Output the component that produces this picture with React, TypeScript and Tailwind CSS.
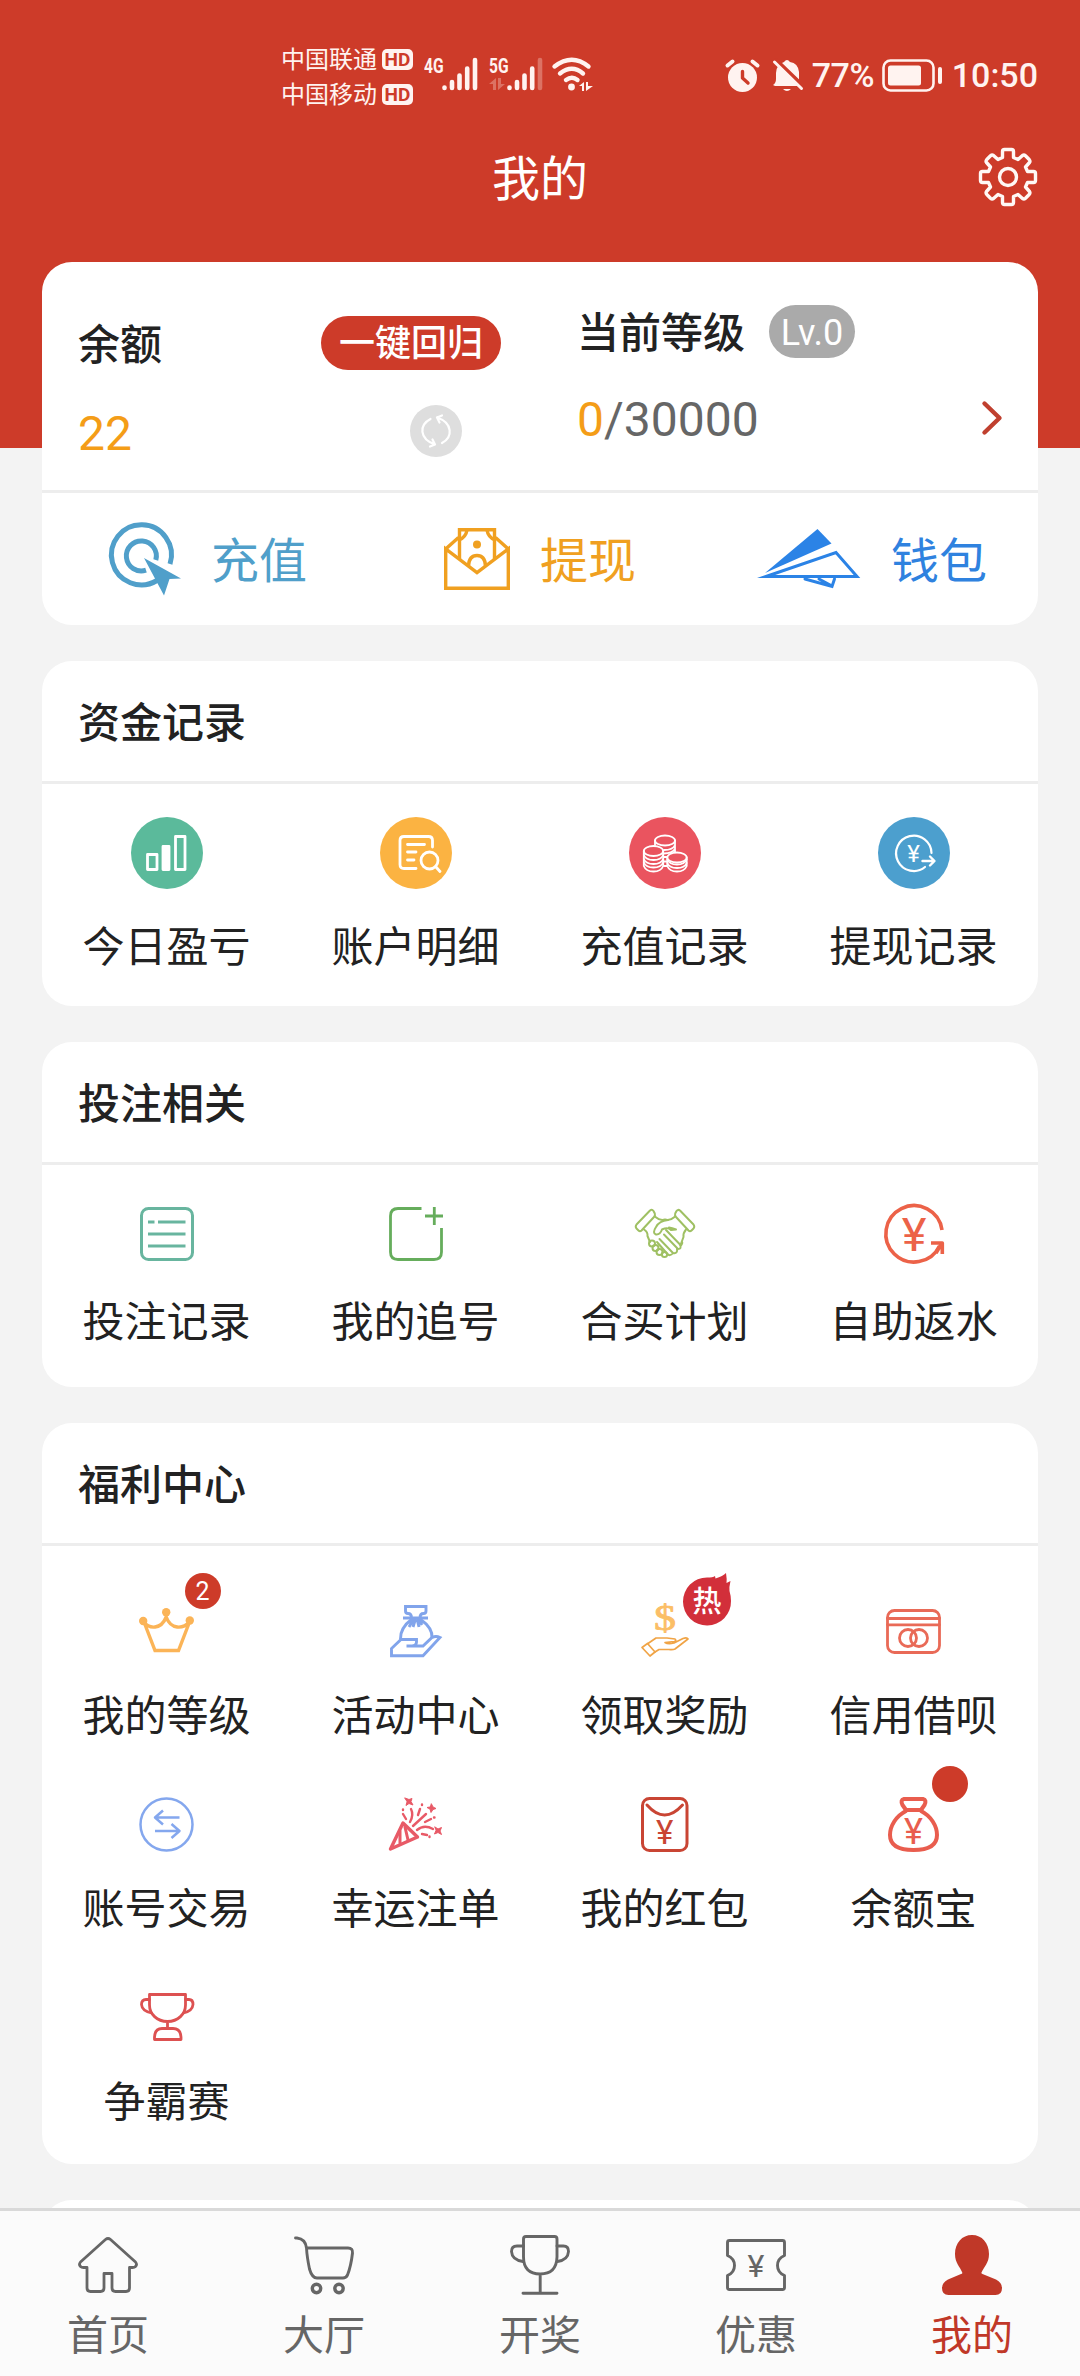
import { ReactNode } from "react";
import clsx from "clsx";

type Item = {
  label: string;
  icon: ReactNode;
  badge?: ReactNode;
};

type SvgProps = {
  w: number;
  h: number;
  color?: string;
  stroke?: number;
  children: ReactNode;
};

function Svg({ w, h, color = "white", stroke = 3, children }: SvgProps) {
  return (
    <svg
      width={w}
      height={h}
      viewBox={`0 0 ${w} ${h}`}
      fill="none"
      stroke={color}
      strokeWidth={stroke}
      strokeLinecap="round"
      strokeLinejoin="round"
      className="shrink-0 overflow-visible"
    >
      {children}
    </svg>
  );
}

function Yen({ x, y, size, color, weight = 400 }: { x: number; y: number; size: number; color: string; weight?: number }) {
  return (
    <text
      x={x}
      y={y}
      fontSize={size}
      fontFamily="Roboto, sans-serif"
      fontWeight={weight}
      fill={color}
      stroke="none"
      textAnchor="middle"
    >
      ¥
    </text>
  );
}

/* status bar */

function SignalBars({ faded = false }: { faded?: boolean }) {
  return (
    <Svg w={36} h={34} stroke={4.6} color="#fff3f0">
      <path d="M2.5 30.5v.5M10 25v6M17.5 18.500v12.500M25.200 11.500v19.500" />
      <path d="M33 3v28" opacity={faded ? 0.3 : 1} />
    </Svg>
  );
}

function Carrier({ name }: { name: string }) {
  return (
    <div className="flex h-[35px] items-center gap-[5px]">
      <span className="text-[24px] leading-[36px]">{name}</span>
      <span className="flex h-[21px] w-[31px] items-center justify-center rounded-[5px] bg-[#fff3f0] text-[19px] leading-[21px] font-bold text-[#cd3b29]">
        HD
      </span>
    </div>
  );
}

function StatusBar() {
  return (
    <div className="flex h-[76px] justify-between pr-[42px] pl-[281px] text-[#fff3f0]">
      <div className="flex">
        <div className="flex flex-col">
          <Carrier name="中国联通" />
          <Carrier name="中国移动" />
        </div>
        <div className="ml-[11px] flex pt-[15px]">
          <span className="w-[18px] origin-left scale-x-[0.78] text-[20px] leading-[18px] font-bold">4G</span>
          <SignalBars />
        </div>
        <div className="ml-[11px] flex pt-[15px]">
          <div className="flex w-[18px] flex-col gap-[3px]">
            <span className="origin-left scale-x-[0.78] text-[20px] leading-[18px] font-bold">5G</span>
            <Svg w={16} h={12} stroke={1} color="none">
              <path d="M0 6L7 0V12H4V6ZM9 0H12V6H16L9 12Z" fill="#fff3f0" opacity="0.3" />
            </Svg>
          </div>
          <SignalBars faded />
        </div>
        <div className="ml-[9px] pt-[15px]">
          <Svg w={42} h={34} stroke={4.4} color="#fff3f0">
            <path d="M2.500 9.500Q20 -4 36.500 9.500M8 16.500Q20 7 31 16.500M14 23Q20 18.500 25.500 23" />
            <circle cx="19.500" cy="30" r="3.400" fill="#fff3f0" stroke="none" />
            <path d="M27 29L32 25V34H30V29ZM34 25H36V29H41L34 34Z" fill="#fff3f0" stroke="none" />
          </Svg>
        </div>
      </div>
      <div className="flex h-[67px] items-center text-[34px] leading-[67px] font-medium">
        <Svg w={35} h={33} stroke={4} color="#fff3f0">
          <circle cx="17.500" cy="18.500" r="14.500" fill="#fff3f0" stroke="none" />
          <path d="M2.500 6.500L7.500 2.500M27.500 2.500L32.500 6.500" />
          <path d="M17.500 12.500V19L23 24" stroke="#cd3b29" strokeWidth="3.400" />
        </Svg>
        <div className="ml-3">
          <Svg w={31} h={33} stroke={3} color="#fff3f0">
            <path
              d="M3 27H25L27 24V13Q26 4 18 3Q15 -1 12 3Q4 6 4 14V20Q4 24 1 26ZM11 30H19Q15 34 11 30Z"
              fill="#fff3f0"
              stroke="none"
            />
            <path d="M4 1L32 28" stroke="#cd3b29" strokeWidth="4" />
            <path d="M2.500 3L29.500 29.500" />
          </Svg>
        </div>
        <span className="ml-[9px] w-[63px] tracking-[-0.5px]">77%</span>
        <div className="ml-[7px]">
          <Svg w={61} h={33} stroke={2.6} color="#fff3f0">
            <rect x="1.500" y="1.500" width="50" height="30" rx="7" />
            <rect x="6" y="6.500" width="33" height="20" rx="2.500" fill="#fff3f0" stroke="none" />
            <rect x="56" y="8" width="4" height="17" rx="2" fill="#fff3f0" stroke="none" />
          </Svg>
        </div>
        <span className="ml-[9px]">10:50</span>
      </div>
    </div>
  );
}

function GearIcon() {
  return (
    <svg width="60" height="60" viewBox="-30 -30 60 60" fill="none" stroke="#fff8f5" strokeWidth="3.400" strokeLinejoin="round">
      <path d="M-5.500 -19.500V-25.500Q-5.500 -27.500 -3.500 -27.500H3.500Q5.500 -27.500 5.500 -25.500V-19.500L10 -17.500L14.500 -21.500Q16 -22.500 17.500 -21.200L21.200 -17.500Q22.500 -16 21.500 -14.500L17.500 -10L19.500 -5.500H25.500Q27.500 -5.500 27.500 -3.500V3.500Q27.500 5.500 25.500 5.500H19.500L17.500 10L21.500 14.500Q22.500 16 21.200 17.500L17.500 21.200Q16 22.500 14.500 21.500L10 17.500L5.500 19.500V25.500Q5.500 27.500 3.500 27.500H-3.500Q-5.500 27.500 -5.500 25.500V19.500L-10 17.500L-14.500 21.500Q-16 22.500 -17.500 21.200L-21.200 17.500Q-22.500 16 -21.500 14.500L-17.500 10L-19.500 5.500H-25.500Q-27.500 5.500 -27.500 3.500V-3.500Q-27.500 -5.500 -25.500 -5.500H-19.500L-17.500 -10L-21.500 -14.500Q-22.500 -16 -21.200 -17.500L-17.500 -21.200Q-16 -22.500 -14.500 -21.500L-10 -17.500Z" />
      <circle r="8.500" />
    </svg>
  );
}

/* balance card */

const actions = [
  {
    label: "充值",
    color: "text-[#509fca]",
    icon: (
      <Svg w={72} h={72} stroke={5} color="#509fca">
        <path d="M48 57.500A30 30 0 1 1 61 41" strokeLinecap="butt" />
        <path d="M37 47.200A15 15 0 1 1 46.800 37" strokeLinecap="butt" />
        <path d="M35 35L72 55.500L60.500 56L55 72.500Z" fill="#509fca" stroke="none" />
      </Svg>
    ),
  },
  {
    label: "提现",
    color: "text-[#f0a020]",
    icon: (
      <Svg w={66} h={62} stroke={3.4} color="#f0a020">
        <g strokeLinejoin="miter" strokeLinecap="butt">
          <path d="M1.700 21V60.300H64.300V21L33 44.500Z" />
          <path d="M1.700 21L14.500 9.500M64.300 21L51.500 9.500" />
          <path d="M15.500 31V1.700H50.500V31" />
          <path d="M23 2Q22 9 15 12M43 2Q44 9 51 12" />
          <path d="M24.500 38Q25 27.500 33 27.500Q41 27.500 41.500 38" />
        </g>
        <circle cx="33" cy="16.500" r="4" fill="#f0a020" stroke="none" />
      </Svg>
    ),
  },
  {
    label: "钱包",
    color: "text-[#2f82df]",
    icon: (
      <Svg w={104} h={60} stroke={3} color="#2b83e6">
        <path d="M60.500 0L74.500 14.500L8 44Z" fill="#2b83e6" stroke="none" />
        <path d="M9 47.500L79 23.500L100 47.500Z" strokeLinejoin="miter" strokeMiterlimit="20" />
        <path d="M48 50L75 57.500L77.500 50M62 50L75 57" strokeLinejoin="miter" />
      </Svg>
    ),
  },
];

function BalanceCard() {
  return (
    <section className="overflow-hidden rounded-[30px] bg-white">
      <div className="flex h-[228px] pr-9 pl-[36px]">
        <div className="w-[423px] pt-[54px]">
          <div className="flex h-[54px] items-center justify-between">
            <h2 className="pt-[5px] text-[42px] leading-[54px] font-medium text-[#222]">余额</h2>
            <button className="h-[54px] w-[180px] rounded-full bg-[#cd3b29] text-center text-[36px] leading-[57px] font-medium text-white">
              一键回归
            </button>
          </div>
          <div className="mt-[35px] flex h-[52px] items-center justify-between pr-[39px]">
            <span className="pt-[5px] text-[48px] leading-[52px] text-[#f49d17]">22</span>
            <span className="flex size-[52px] items-center justify-center rounded-full bg-[#dedede]">
              <Svg w={52} h={52} stroke={2.2}>
                <path d="M20.500 14C9 20 9 34 25 39.500M25 39.500L20 41.500M25 39.500L22.500 34.500" />
                <path d="M32 38C43 32 43 18 27 12.500M27 12.500L32 10.500M27 12.500L29.500 17.500" />
              </Svg>
            </span>
          </div>
        </div>
        <div className="ml-[76px] flex-1 pt-[43px]">
          <div className="flex h-[53px] items-center gap-[24px]">
            <h2 className="pt-[3px] text-[42px] leading-[53px] font-medium text-[#222]">当前等级</h2>
            <span className="h-[53px] w-[86px] rounded-full bg-[#aaa] text-center text-[36px] leading-[57px] text-white">Lv.0</span>
          </div>
          <div className="mt-[34px] flex h-[52px] items-center justify-between">
            <span className="pt-[3px] text-[48px] leading-[52px] text-[#666]">
              <span className="text-[#f49d17]">0</span>/30000
            </span>
            <Svg w={20} h={34} stroke={4.4} color="#c0402f">
              <path d="M2.500 2.500L17.500 17L2.500 31.500" />
            </Svg>
          </div>
        </div>
      </div>
      <div className="grid h-[135px] grid-cols-3 border-t-[3px] border-[#ededed]">
        {actions.map((action) => (
          <div key={action.label} className="flex items-center justify-center gap-[30px]">
            {action.icon}
            <span className={clsx("pt-[5px] text-[48px] leading-[60px]", action.color)}>{action.label}</span>
          </div>
        ))}
      </div>
    </section>
  );
}

/* sections */

function Disc({ className, children }: { className: string; children: ReactNode }) {
  return (
    <div className={clsx("size-[72px] rounded-full", className)}>
      <Svg w={72} h={72} stroke={2.2}>
        {children}
      </Svg>
    </div>
  );
}

const funds: Item[] = [
  {
    label: "今日盈亏",
    icon: (
      <Disc className="bg-[#5bba9b]">
        <g strokeWidth="2.800" strokeLinejoin="round">
          <rect x="16.500" y="37.500" width="9.500" height="15" />
          <rect x="32" y="29.500" width="6" height="23" fill="white" />
          <rect x="44.500" y="19.500" width="9.500" height="33" />
        </g>
      </Disc>
    ),
  },
  {
    label: "账户明细",
    icon: (
      <Disc className="bg-[#fbb342]">
        <g strokeWidth="2.800">
          <path d="M36 51.500H24Q20 51.500 20 47.500V23.500Q20 19.500 24 19.500H48.500Q52.500 19.500 52.500 23.500V30" />
          <path d="M27.500 27.500H44.500M27.500 35H36M27.500 43H34" />
          <circle cx="49.500" cy="43.500" r="8.500" />
          <path d="M55.500 49.500L60 54.500" />
        </g>
      </Disc>
    ),
  },
  {
    label: "充值记录",
    icon: (
      <Disc className="bg-[#ea545f]">
        <g strokeWidth="1.800">
          <path d="M26 28V23.500M46 23.500V35M46 28Q44 33 35 33M46 32Q43 36.500 35 36.500M35 40H38M35 44.500H38M35 49H38" />
          <ellipse cx="36" cy="23.500" rx="10" ry="5" />
          <ellipse cx="24.500" cy="34" rx="9.700" ry="5" />
          <path d="M14.800 34V49Q17 54.500 24.500 54.500Q32 54.500 34.200 49V34" />
          <path d="M14.800 38Q17 43 24.500 43Q32 43 34.200 38M14.800 42Q17 47 24.500 47Q32 47 34.200 42M14.800 45.500Q17 50.500 24.500 50.500Q32 50.500 34.200 45.500" />
          <ellipse cx="48" cy="40.500" rx="9.700" ry="5" />
          <path d="M38.300 40.500V49Q40.500 54.500 48 54.500Q55.500 54.500 57.700 49V40.500" />
          <path d="M38.300 42.500Q40.500 47.500 48 47.500Q55.500 47.500 57.700 42.500M38.300 46Q40.500 51 48 51Q55.500 51 57.700 46" />
        </g>
      </Disc>
    ),
  },
  {
    label: "提现记录",
    icon: (
      <Disc className="bg-[#4c9fce]">
        <path d="M53.500 36A17.700 17.700 0 1 0 47 50" />
        <path d="M44.500 44H56M52 39.500L56.500 44L52 48.500" strokeWidth="2.400" />
        <Yen x={35.500} y={44.500} size={24} color="white" />
      </Disc>
    ),
  },
];

const bets: Item[] = [
  {
    label: "投注记录",
    icon: (
      <Svg w={54} h={54} color="#68b59f" stroke={3}>
        <rect x="1.500" y="1.500" width="51" height="51" rx="7" />
        <path d="M8 15H14.500M18 15H45.500M8 27H45.500M8 39H45.500" strokeLinecap="butt" strokeWidth="2.800" />
      </Svg>
    ),
  },
  {
    label: "我的追号",
    icon: (
      <Svg w={54} h={54} color="#66ad5c" stroke={2.8}>
        <g strokeLinecap="butt">
          <path d="M32.500 1.500H9Q1.500 1.500 1.500 9V45Q1.500 52.500 9 52.500H45Q52.500 52.500 52.500 45V21" />
          <path d="M36 9H54M45.300 0V18" />
        </g>
      </Svg>
    ),
  },
  {
    label: "合买计划",
    icon: (
      <Svg w={60} h={50} color="#9fc063" stroke={2}>
        <path d="M15 1.500Q17 0 18.500 2L19.800 4.500Q20.500 6.500 19 8L6.500 21.500Q5 23 3.500 21.500L1.500 19.500Q0 17.500 1.500 15.500Z" />
        <path d="M45 1.500Q43 0 41.500 2L40.200 4.500Q39.500 6.500 41 8L53.500 21.500Q55 23 56.500 21.500L58.500 19.500Q60 17.500 58.500 15.500Z" />
        <path d="M20.500 8Q25 12 30 10.500Q35 12 39.500 8M9 20.500Q13 23 12.500 27L15 33M51 20.500Q48 24 48.500 28L45.500 36" />
        <path d="M33 11Q24 12 21 18Q17 24 21 25.500Q25 26 27 20.500Q33 18 36 21L41 20.500Q37 19 34 18.500" />
        <path d="M31 21L45 35.500Q47 40 43 40L29 25.500M42 39.500Q43 45 38 44L24.500 30M38 44Q35 48 32 44.500L22 33M47 33Q48 34 45.500 37" />
        <circle cx="17" cy="34.500" r="3" />
        <circle cx="20.500" cy="39" r="3" />
        <circle cx="24.500" cy="43" r="3" />
        <circle cx="29.500" cy="45.500" r="2.600" />
      </Svg>
    ),
  },
  {
    label: "自助返水",
    icon: (
      <Svg w={60} h={60} color="#ec6248" stroke={3.6}>
        <g strokeLinecap="butt">
          <path d="M58 26A28.200 28.200 0 1 0 55.500 42" />
          <path d="M47 39H58.300V50M58 39L52 49" />
        </g>
        <Yen x={30} y={47} size={47} color="#ec6248" />
      </Svg>
    ),
  },
];

function CountBadge({ children }: { children?: ReactNode }) {
  return (
    <span className="absolute top-[-30px] left-1/2 ml-[18px] size-9 rounded-full bg-[#cd3b29] text-center text-[25px] leading-[37px] text-white">
      {children}
    </span>
  );
}

function HotBadge() {
  return (
    <span className="absolute top-[-30px] left-1/2 ml-[18px]">
      <Svg w={48} h={52} color="none">
        <path d="M24 4.500Q30 4.500 32 3L32.500 5.500Q40 3 43 0Q44 6 43.500 10L47.500 8Q46 14 46.500 18Q48 23 48 28A24 24 0 1 1 24 4.500Z" fill="#d22f3a" />
        <text x="24" y="39" fontSize="29" fontWeight="500" fontFamily="'Noto Sans CJK SC', sans-serif" fill="white" textAnchor="middle">
          热
        </text>
      </Svg>
    </span>
  );
}

const welfare: Item[] = [
  {
    label: "我的等级",
    badge: <CountBadge>2</CountBadge>,
    icon: (
      <Svg w={55} h={46} color="#fbb457" stroke={3.4}>
        <path d="M5 14L16 42.500H39.500L50.500 14C44 21 32 22 27.200 9C22 22 10 21 5 14" strokeLinejoin="miter" />
        <g fill="#fbb457" stroke="none">
          <circle cx="4.200" cy="13" r="4.200" />
          <circle cx="27.200" cy="4.200" r="4.200" />
          <circle cx="50.800" cy="12.500" r="4.200" />
        </g>
      </Svg>
    ),
  },
  {
    label: "活动中心",
    icon: (
      <Svg w={52} h={53} color="#81a4eb" stroke={2.9}>
        <g strokeLinejoin="miter" strokeLinecap="butt">
          <path d="M21.500 13Q21.500 8.500 18 8.500Q15.500 8.500 15.500 6V1.500H36V6Q36 8.500 33.500 8.500Q30 8.500 30 13M13 13H38" />
          <path d="M24 13.500L19 22M25.500 14L23 22M27 14L29 22M28 13.500L32 20M22 14Q10 23 10.500 34M30 14Q43 23 42 33" />
          <path d="M1.500 50.800V43.500L11 34.500H26.500V37Q26.500 40.500 22 41H16.500H33L42 32.500Q46 30.500 50 32.500L33 50.800Z" />
        </g>
      </Svg>
    ),
  },
  {
    label: "领取奖励",
    badge: <HotBadge />,
    icon: (
      <Svg w={54} h={54} color="#f0a446" stroke={1.700}>
        <text x="27" y="25.500" fontSize="35" fontFamily="'Liberation Serif', serif" fill="#fbbe66" stroke="#fbbe66" strokeWidth="0.800" textAnchor="middle" textLength="22" lengthAdjust="spacingAndGlyphs">
          $
        </text>
        <path d="M4 43.500L9.500 39.500L17 48L12 52Z" />
        <path d="M10 39.500L18 34H29L37 35Q39 37 36 37.500L27 38.500Q30 40.500 36 39L45 34.500Q49 33 50 35L37 45Q35 46 31 45.500L21 45.500L17 48" />
      </Svg>
    ),
  },
  {
    label: "信用借呗",
    icon: (
      <Svg w={55} h={45} color="#e96a57" stroke={2.8}>
        <rect x="1.500" y="1.500" width="52" height="42" rx="7" />
        <path d="M1.500 9.500H53.500M1.500 15.800H53.500" />
        <circle cx="22" cy="29" r="8.500" />
        <circle cx="33" cy="29" r="8.500" />
      </Svg>
    ),
  },
  {
    label: "账号交易",
    icon: (
      <Svg w={55} h={55} color="#84a7ee" stroke={2.5}>
        <circle cx="27.500" cy="27.500" r="26" />
        <path d="M40.500 20.500H16M24 13.500L16 20.500L24 27.500M16 34H40.500M32.500 27L40.500 34L32.500 41" strokeLinecap="butt" />
      </Svg>
    ),
  },
  {
    label: "幸运注单",
    icon: (
      <Svg w={53} h={54} color="#e85a67" stroke={2.400}>
        <path d="M1.500 52L14 26L28.500 40Z" strokeWidth="3.400" />
        <path d="M11 34V46M16 30L19 43" strokeWidth="3" />
        <path d="M22 12Q25 18 21 25M24 29L37 17M28 33Q35 27 44 32M14 17L17 22M29 18L31 12M36 25L42 22M33 37L38 38M14 13V12.500M33 8V7.500M45 20.500H45.500M40.500 39.500V40" />
        <g fill="#e85a67" strokeWidth="1">
          <path d="M16 1L20 2.500L23 1.500L22 4.500L24 8L20 6.500L17 8.500L18 5Z" />
          <path d="M42.500 7L44 10L47 11.500L44 12.500L42 15.500L41 12L38 10.500L41 10Z" />
          <path d="M46 30L49 32L52.500 30.500L51 34L52.500 37.500L49 35.500L45.500 37L47 33.500Z" />
        </g>
      </Svg>
    ),
  },
  {
    label: "我的红包",
    icon: (
      <Svg w={47} h={55} color="#c94534" stroke={3}>
        <rect x="1.500" y="1.500" width="44.500" height="52" rx="7" />
        <path d="M6 8Q23.500 28 41.500 8" />
        <Yen x={23.700} y={46.500} size={33} color="#c94534" />
      </Svg>
    ),
  },
  {
    label: "余额宝",
    badge: <CountBadge />,
    icon: (
      <Svg w={51} h={55} color="#e95d4e" stroke={4}>
        <path d="M16 2H35Q39 3 36.500 8L33 13H18L14.500 8Q12 3 16 2Z" />
        <path d="M18 14C8 19 2 29 2 38C2 48 10 53 25.500 53C41 53 49 48 49 38C49 29 43 19 33 14" />
        <Yen x={25.500} y={46.500} size={36} color="#e95d4e" />
      </Svg>
    ),
  },
  {
    label: "争霸赛",
    icon: (
      <Svg w={54} h={48} color="#dd5151" stroke={2.800}>
        <path d="M9.500 1.500H45.500V12C45.500 21 38 28.500 27.500 28.500C17 28.500 9.500 21 9.500 12ZM27.500 28.500V35" />
        <path d="M9.500 6.500H6Q1.500 6.500 1.500 11.500Q2 18 11.500 20M45.500 6.500H49Q53 6.500 53 11.500Q52.500 18 43.500 20" />
        <path d="M14.500 46.500V44Q15 35.500 22 35.500H33Q40.500 35.500 41 44V46.500Z" />
      </Svg>
    ),
  },
];

type SectionProps = {
  title: string;
  items: Item[];
  itemClass: string;
  iconClass: string;
  className?: string;
};

function Section({ title, items, itemClass, iconClass, className }: SectionProps) {
  return (
    <section className={clsx("rounded-[30px] bg-white", className)}>
      <h2 className="h-[120px] pl-[36px] text-[42px] leading-[126px] font-medium text-[#222]">{title}</h2>
      <div className="grid grid-cols-4 border-t-[3px] border-[#ededed]">
        {items.map((item) => (
          <div key={item.label} className={clsx("flex flex-col items-center", itemClass)}>
            <div className={clsx("relative flex w-full items-center justify-center", iconClass)}>
              {item.icon}
              {item.badge}
            </div>
            <span className="h-[48px] text-[42px] leading-[52px] text-[#222]">{item.label}</span>
          </div>
        ))}
      </div>
    </section>
  );
}

/* bottom tabs */

const tabs = [
  {
    label: "首页",
    icon: (
      <Svg w={60} h={60} color="#666" stroke={2.800}>
        <path d="M27.500 4.500Q30 2.500 32.500 4.500L57.500 27Q59.500 29.500 57.500 31.500Q56.500 32.500 54.500 32.500H51.500V53Q51.500 56.500 48 56.500H37.500Q34 56.500 34 53V38.500H26V53Q26 56.500 22.500 56.500H12.500Q9 56.500 9 53V32.500H5.500Q3.500 32.500 2.500 31.500Q0.500 29.500 2.500 27Z" />
      </Svg>
    ),
  },
  {
    label: "大厅",
    icon: (
      <Svg w={60} h={60} color="#666" stroke={2.900}>
        <path d="M1.500 3H3Q11.500 4 12.500 13H54Q59 13 58.500 18Q57 31 53.500 40Q52 43 49 43H23Q18 43 15.500 34Q13 22 12.500 13" />
        <circle cx="22.500" cy="53.500" r="4.200" strokeWidth="3.400" />
        <circle cx="45" cy="53.500" r="4.200" strokeWidth="3.400" />
      </Svg>
    ),
  },
  {
    label: "开奖",
    icon: (
      <Svg w={60} h={60} color="#666" stroke={2.900}>
        <path d="M16 1.500H44.500Q47 1.500 47 4V22Q46.500 39 30.200 39Q13.500 39 13.500 22V4Q13.500 1.500 16 1.500ZM30.200 39V58.300M13 58.300H47" />
        <path d="M13.500 11H7Q1.500 11 1.500 16.500Q2 25 13 26.500M47 11H53.500Q58.500 11 58.500 16.500Q58 25 47.500 26.500" />
      </Svg>
    ),
  },
  {
    label: "优惠",
    icon: (
      <Svg w={60} h={60} color="#666" stroke={2.900}>
        <path d="M3.500 5.500H56.500Q58.500 5.500 58.500 7.500V20.500Q51.500 23.500 51.500 30.500Q51.500 37.500 58.500 40.500V52.500Q58.500 54.500 56.500 54.500H3.500Q1.500 54.500 1.500 52.500V40.500Q8.500 37.500 8.500 30.500Q8.500 23.500 1.500 20.500V7.500Q1.500 5.500 3.500 5.500Z" />
        <Yen x={30} y={41.500} size={32} color="#666" />
      </Svg>
    ),
  },
  {
    label: "我的",
    active: true,
    icon: (
      <Svg w={60} h={60} color="none">
        <path
          d="M30 0C40 0 47 8 47 19C47 28 42 32 39.500 37.500Q39 38.500 40.500 39L54 44.500Q60 47.500 60 53Q60 60 53.500 60H6.500Q0 60 0 53Q0 47.500 6 44.500L19 39Q21 38.500 20 37C18 32 13 28 13 19C13 8 20 0 30 0Z"
          fill="#c03828"
        />
      </Svg>
    ),
  },
];

function TabBar() {
  return (
    <nav className="grid h-[168px] shrink-0 grid-cols-5 border-t-[3px] border-[#d9d9d9] bg-[#fbfbfb]">
      {tabs.map((tab) => (
        <div key={tab.label} className="flex flex-col items-center pt-6">
          {tab.icon}
          <span className={clsx("mt-4 text-[41px] leading-[50px]", tab.active ? "text-[#c03828]" : "text-[#666]")}>
            {tab.label}
          </span>
        </div>
      ))}
    </nav>
  );
}

export default function App() {
  return (
    <div className="flex h-[2376px] w-[1080px] flex-col overflow-hidden bg-[#f3f3f3] font-[Roboto,'Noto_Sans_CJK_SC',sans-serif]">
      <div className="min-h-0 flex-1 overflow-hidden">
        <header className="h-[448px] bg-[#cd3b29] pt-[42px]">
          <StatusBar />
          <div className="grid h-[118px] grid-cols-3 items-center">
            <h1 className="col-start-2 pt-[5px] text-center text-[48px] leading-[60px] text-white">我的</h1>
            <div className="flex justify-end pr-[42px]">
              <GearIcon />
            </div>
          </div>
        </header>
        <main className="-mt-[186px] flex flex-col gap-9 px-[42px]">
          <BalanceCard />
          <Section title="资金记录" items={funds} itemClass="pt-[33px] pb-9" iconClass="mb-[33px] h-[72px]" />
          <Section title="投注相关" items={bets} itemClass="pt-[39px] pb-[42px]" iconClass="mb-[33px] h-[60px]" />
          <Section title="福利中心" items={welfare} itemClass="pt-[57px]" iconClass="mb-[32px] h-[56px]" className="pb-[39px]" />
          <section className="h-[120px] rounded-[30px] bg-white" />
        </main>
      </div>
      <TabBar />
    </div>
  );
}
